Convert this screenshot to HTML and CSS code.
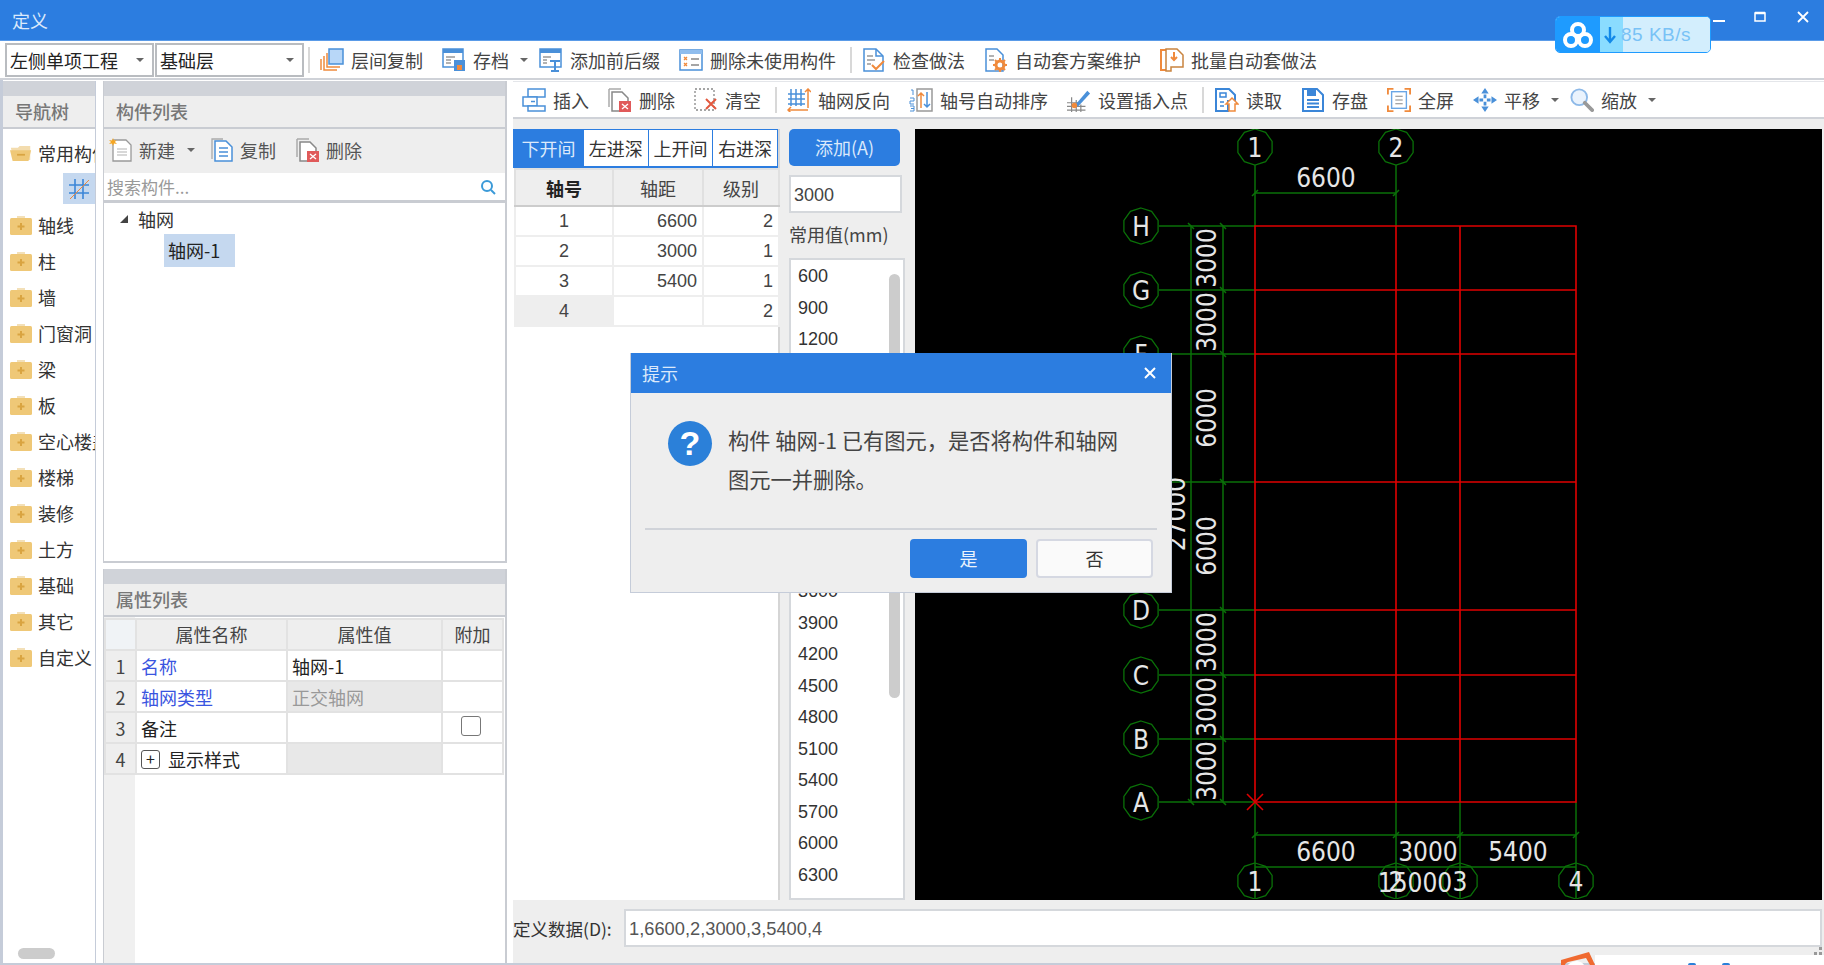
FILE: index.html
```html
<!DOCTYPE html>
<html lang="zh-CN">
<head>
<meta charset="utf-8">
<title>定义</title>
<link rel="stylesheet" href="styles.css">
</head>
<body>
<svg class="defs" width="0" height="0">
  <defs>
    <symbol id="i-folder" viewBox="0 0 22 20"><path d="M7 1h8v3H7z" fill="#f3e0b8"/><rect x="0" y="3" width="22" height="17" rx="1.5" fill="#efc877"/><path d="M11 8v7M7.500 11.500h7" stroke="#d9a441" stroke-width="2"/></symbol>
    <symbol id="i-folder-open" viewBox="0 0 25 20"><path d="M1 4h8l2 -2h12v16H4z" fill="#f3dcae"/><path d="M0 7h24l-3 12H3z" fill="#efc877"/><path d="M8 12h9" stroke="#d9a441" stroke-width="2"/></symbol>
    <symbol id="i-copyfloor" viewBox="0 0 24 24"><rect x="9" y="1" width="14" height="15" fill="#b8d7f8" stroke="#4a90d9" stroke-width="1.500"/><path d="M7 5v14h13M4 8v14h13M1 11v11" fill="none" stroke="#f08a3c" stroke-width="1.500"/></symbol>
    <symbol id="i-archive" viewBox="0 0 24 24"><rect x="1" y="1" width="20" height="18" fill="#fff" stroke="#4a90d9" stroke-width="1.500"/><rect x="1" y="1" width="20" height="4" fill="#4a90d9"/><path d="M4 9h9M4 12h5M4 15h5" stroke="#999" stroke-width="1.500"/><rect x="12" y="12" width="11" height="11" fill="#4a90d9"/><rect x="15" y="17" width="5" height="5" fill="#f08a3c"/></symbol>
    <symbol id="i-prefix" viewBox="0 0 24 24"><rect x="1" y="1" width="21" height="18" fill="#fff" stroke="#4a90d9" stroke-width="1.500"/><rect x="1" y="1" width="21" height="4" fill="#4a90d9"/><path d="M4 9h8M4 12h4M4 15h4" stroke="#999" stroke-width="1.500"/><path d="M11 13h10M16 13v10M12 23h8" stroke="#4a90d9" stroke-width="2"/></symbol>
    <symbol id="i-unused" viewBox="0 0 24 24"><rect x="1" y="2" width="22" height="20" fill="#fff" stroke="#4a90d9" stroke-width="1.500"/><rect x="1" y="2" width="22" height="4" fill="#8fbdee"/><path d="M5 9l3 3M8 9l-3 3M5 15l3 3M8 15l-3 3" stroke="#f08a3c" stroke-width="1.300"/><path d="M12 11h8M12 17h8" stroke="#888" stroke-width="1.500"/></symbol>
    <symbol id="i-check" viewBox="0 0 24 24"><path d="M2 1h12l7 7v15H2z" fill="#fff" stroke="#4a90d9" stroke-width="1.500"/><path d="M14 1v7h7" fill="none" stroke="#4a90d9" stroke-width="1.500"/><path d="M5 8h6M5 12h8M5 16h4" stroke="#999" stroke-width="1.500"/><path d="M10 17l4 4 8-8" fill="none" stroke="#f08a3c" stroke-width="2"/></symbol>
    <symbol id="i-gear" viewBox="0 0 24 24"><path d="M2 1h11l6 6v16H2z" fill="#fff" stroke="#4a90d9" stroke-width="1.500"/><path d="M5 8h5M5 12h5" stroke="#999" stroke-width="1.500"/><circle cx="16" cy="17" r="4" fill="none" stroke="#f08a3c" stroke-width="3"/><path d="M16 10v3M16 21v3M9 17h3M20 17h3M11 12l2 2M19 20l2 2M21 12l-2 2M13 20l-2 2" stroke="#f08a3c" stroke-width="2"/></symbol>
    <symbol id="i-batch" viewBox="0 0 24 24"><path d="M6 2H1v20h5" fill="none" stroke="#f08a3c" stroke-width="2"/><path d="M6 1h11l6 6v12H11v4H6z" fill="#fff" stroke="#c9843f" stroke-width="1.500"/><path d="M14 4v8M11 9l3 3 3-3" fill="none" stroke="#f08a3c" stroke-width="2"/></symbol>
    <symbol id="i-insert" viewBox="0 0 24 24"><rect x="6" y="1" width="17" height="8" fill="#fff" stroke="#4a90d9" stroke-width="1.500"/><rect x="1" y="9" width="14" height="9" fill="#fff" stroke="#4a90d9" stroke-width="1.500"/><rect x="6" y="18" width="17" height="5" fill="#fff" stroke="#4a90d9" stroke-width="1.500"/><path d="M9 13.500h4" stroke="#4a90d9" stroke-width="1.500"/></symbol>
    <symbol id="i-del" viewBox="0 0 24 24"><path d="M1 1h12M1 1v18" stroke="#aaa" stroke-width="1.500" fill="none"/><path d="M4 4h10l6 6v13H4z" fill="#fff" stroke="#888" stroke-width="1.500"/><rect x="11" y="13" width="12" height="11" fill="#e05a5a"/><path d="M14 16l6 5M20 16l-6 5" stroke="#fff" stroke-width="1.300"/></symbol>
    <symbol id="i-clear" viewBox="0 0 24 24"><rect x="1" y="1" width="19" height="21" fill="none" stroke="#888" stroke-width="1.300" stroke-dasharray="2 2"/><path d="M12 11l10 10M22 11l-10 10" stroke="#e2583e" stroke-width="2"/></symbol>
    <symbol id="i-axisrev" viewBox="0 0 24 24"><path d="M4 1v17M9 1v17M14 1v17M1 6h17M1 11h17M1 16h17" stroke="#4a90d9" stroke-width="1.500"/><path d="M21 1v19M18 4l3-3 3 3M1 22h20M4 19l-3 3 3 3" fill="none" stroke="#f08a3c" stroke-width="1.500"/></symbol>
    <symbol id="i-axissort" viewBox="0 0 24 24"><rect x="8" y="1" width="15" height="22" fill="none" stroke="#999" stroke-width="1.500"/><path d="M12 20V5M9 8l3-3 3 3" fill="none" stroke="#f08a3c" stroke-width="1.500"/><path d="M18 4v15M15 16l3 3 3-3" fill="none" stroke="#4a90d9" stroke-width="1.500"/><path d="M2 2h2v5M1 10h4v3H1v3h4M1 18h4v5H1M2 20.500h3" fill="none" stroke="#4a90d9" stroke-width="1"/></symbol>
    <symbol id="i-point" viewBox="0 0 26 26"><path d="M5 10v16M10 13v13M15 18v8M0 16h14M0 20h20M0 24h20" stroke="#888" stroke-width="1.300"/><path d="M10 17L22 3l3 3-12 13-4 2z" fill="#4a90d9"/><circle cx="8" cy="19" r="3" fill="#f08a3c"/></symbol>
    <symbol id="i-read" viewBox="0 0 24 24"><path d="M1 1h13l6 6v6h-7v10H1z" fill="#fff" stroke="#3b86d8" stroke-width="2"/><path d="M5 5h6v4H5zM5 14h4M5 18h4" stroke="#3b86d8" stroke-width="1.500" fill="none"/><path d="M17 10l6 6h-3v7h-6v-7h-3z" fill="#fff" stroke="#f08a3c" stroke-width="1.500"/></symbol>
    <symbol id="i-save" viewBox="0 0 24 24"><path d="M2 1h14l6 6v16H2z" fill="#fff" stroke="#3b86d8" stroke-width="2"/><rect x="6" y="2" width="9" height="6" fill="#3b86d8"/><path d="M6 12h12M6 15.500h12M6 19h12" stroke="#3b86d8" stroke-width="1.800"/></symbol>
    <symbol id="i-full" viewBox="0 0 26 26"><path d="M1 7V1h6M19 1h6v6M25 19v6h-6M7 25H1v-6" fill="none" stroke="#f08a3c" stroke-width="2"/><rect x="5" y="4" width="16" height="18" fill="#fff" stroke="#6aa6e6" stroke-width="1.500"/><path d="M9 9h8M9 13h8M9 17h8" stroke="#888" stroke-width="1.200"/></symbol>
    <symbol id="i-pan" viewBox="0 0 26 26"><path d="M13 0l4 6h-8zM13 26l-4-6h8zM0 13l6-4v8zM26 13l-6 4V9z" fill="#4a90d9"/><path d="M13 7v4M13 15v4M7 13h4M15 13h4" stroke="#4a90d9" stroke-width="3"/></symbol>
    <symbol id="i-zoom" viewBox="0 0 26 26"><circle cx="10" cy="10" r="8.500" fill="#eaf3fd" stroke="#8db9e8" stroke-width="2"/><path d="M16 16l8 8" stroke="#999" stroke-width="4" stroke-linecap="round"/></symbol>
    <symbol id="i-new" viewBox="0 0 24 24"><path d="M4 2h13l5 5v16H4z" fill="#fff" stroke="#999" stroke-width="1.300"/><path d="M8 11h10M8 14h10M8 17h10" stroke="#ccc" stroke-width="1.300"/><path d="M4 0l1 2.500L7.500 2 6 4l2 2-3-.5L4 8 3 5.500 0 6l2-2L0 2l3 .5z" fill="#f5a623"/></symbol>
    <symbol id="i-copy" viewBox="0 0 22 24"><path d="M1 21V1h11" fill="none" stroke="#aaa" stroke-width="1.300"/><path d="M4 3h11l6 6v14H4z" fill="#fff" stroke="#4a90d9" stroke-width="1.500"/><path d="M8 10h9M8 14h9M8 18h9" stroke="#4a90d9" stroke-width="1.300"/></symbol>
    <symbol id="c-mark" viewBox="-19 -19 38 38"><polygon points="0,-18 10.600,-14.600 17.100,-5.600 17.100,5.600 10.600,14.600 0,18 -10.600,14.600 -17.100,5.600 -17.100,-5.600 -10.600,-14.600" fill="none" stroke="#0a7008" stroke-width="1.300"/></symbol>
  </defs>
</svg>

<div class="window">
  <header class="titlebar"><span class="title">定义</span>
    <div class="winctl">
      <svg class="winbtn" width="14" height="14" viewBox="0 0 14 14"><path d="M1 9h12" stroke="#fff" stroke-width="2"/></svg>
      <svg class="winbtn" width="14" height="14" viewBox="0 0 14 14"><path d="M2 3h10v8H2z" fill="none" stroke="#fff" stroke-width="1.500"/><path d="M2 3h10" stroke="#fff" stroke-width="2.500"/></svg>
      <svg class="winbtn" width="14" height="14" viewBox="0 0 14 14"><path d="M2 2l10 10M12 2L2 12" stroke="#fff" stroke-width="1.800"/></svg>
    </div>
  </header>

  <div class="toolbar top">
    <div class="select wide"><span>左侧单项工程</span><i class="caret"></i></div>
    <div class="select"><span>基础层</span><i class="caret"></i></div>
    <i class="sep"></i>
    <div class="tool"><svg class="ico"><use href="#i-copyfloor"/></svg>层间复制</div>
    <div class="tool"><svg class="ico"><use href="#i-archive"/></svg>存档<i class="caret"></i></div>
    <div class="tool"><svg class="ico"><use href="#i-prefix"/></svg>添加前后缀</div>
    <div class="tool"><svg class="ico"><use href="#i-unused"/></svg>删除未使用构件</div>
    <i class="sep"></i>
    <div class="tool"><svg class="ico"><use href="#i-check"/></svg>检查做法</div>
    <div class="tool"><svg class="ico"><use href="#i-gear"/></svg>自动套方案维护</div>
    <div class="tool"><svg class="ico"><use href="#i-batch"/></svg>批量自动套做法</div>
  </div>

  <main class="main">
    <aside class="nav">
      <div class="band"></div>
      <div class="phead">导航树</div>
      <ul class="navtree">
        <li class="navrow"><svg class="fold"><use href="#i-folder-open"/></svg>常用构件</li>
        <li class="navsub"><span class="navsel"><svg width="22" height="22" viewBox="0 0 22 22"><path d="M7 1v20M15 1v20M1 7h20M1 15h20" stroke="#3b86d8" stroke-width="1.600"/><path d="M2 21L21 2" stroke="#f08a3c" stroke-width="1"/></svg></span></li>
        <li class="navrow"><svg class="fold"><use href="#i-folder"/></svg>轴线</li>
        <li class="navrow"><svg class="fold"><use href="#i-folder"/></svg>柱</li>
        <li class="navrow"><svg class="fold"><use href="#i-folder"/></svg>墙</li>
        <li class="navrow"><svg class="fold"><use href="#i-folder"/></svg>门窗洞</li>
        <li class="navrow"><svg class="fold"><use href="#i-folder"/></svg>梁</li>
        <li class="navrow"><svg class="fold"><use href="#i-folder"/></svg>板</li>
        <li class="navrow"><svg class="fold"><use href="#i-folder"/></svg>空心楼盖</li>
        <li class="navrow"><svg class="fold"><use href="#i-folder"/></svg>楼梯</li>
        <li class="navrow"><svg class="fold"><use href="#i-folder"/></svg>装修</li>
        <li class="navrow"><svg class="fold"><use href="#i-folder"/></svg>土方</li>
        <li class="navrow"><svg class="fold"><use href="#i-folder"/></svg>基础</li>
        <li class="navrow"><svg class="fold"><use href="#i-folder"/></svg>其它</li>
        <li class="navrow"><svg class="fold"><use href="#i-folder"/></svg>自定义</li>
      </ul>
      <div class="navthumb"></div>
    </aside>

    <section class="mid">
      <div class="panel upper">
        <div class="band"></div>
        <div class="phead">构件列表</div>
        <div class="listbar">
          <div class="ltool"><svg class="ico"><use href="#i-new"/></svg>新建<i class="caret"></i></div>
          <div class="ltool"><svg class="ico"><use href="#i-copy"/></svg>复制</div>
          <div class="ltool"><svg class="ico"><use href="#i-del"/></svg>删除</div>
        </div>
        <div class="search"><span>搜索构件...</span>
          <svg width="16" height="16" viewBox="0 0 16 16"><circle cx="7" cy="7" r="5" fill="none" stroke="#3b9ad8" stroke-width="2"/><path d="M11 11l4 4" stroke="#3b9ad8" stroke-width="2"/></svg>
        </div>
        <div class="tree">
          <div class="treeroot"><i class="tri"></i>轴网</div>
          <div class="treeleaf"><span class="leafsel">轴网-1</span></div>
        </div>
      </div>
      <div class="panel lower">
        <div class="band"></div>
        <div class="phead">属性列表</div>
        <div class="propwrap">
          <table class="props">
            <colgroup><col class="c-n"><col class="c-name"><col class="c-val"><col class="c-add"></colgroup>
            <thead><tr><th class="corner"></th><th>属性名称</th><th>属性值</th><th>附加</th></tr></thead>
            <tbody>
              <tr><td class="num">1</td><td class="link">名称</td><td>轴网-1</td><td></td></tr>
              <tr><td class="num">2</td><td class="link">轴网类型</td><td class="off">正交轴网</td><td></td></tr>
              <tr><td class="num">3</td><td>备注</td><td></td><td class="mid-c"><i class="checkbox"></i></td></tr>
              <tr><td class="num">4</td><td><i class="plus">+</i>显示样式</td><td class="off"></td><td></td></tr>
            </tbody>
          </table>
        </div>
      </div>
    </section>

    <section class="right">
      <div class="toolbar second">
        <div class="tool"><svg class="ico"><use href="#i-insert"/></svg>插入</div>
        <div class="tool"><svg class="ico"><use href="#i-del"/></svg>删除</div>
        <div class="tool"><svg class="ico"><use href="#i-clear"/></svg>清空</div>
        <i class="sep"></i>
        <div class="tool"><svg class="ico"><use href="#i-axisrev"/></svg>轴网反向</div>
        <div class="tool"><svg class="ico"><use href="#i-axissort"/></svg>轴号自动排序</div>
        <div class="tool"><svg class="ico"><use href="#i-point"/></svg>设置插入点</div>
        <i class="sep roomy"></i>
        <div class="tool"><svg class="ico"><use href="#i-read"/></svg>读取</div>
        <div class="tool"><svg class="ico"><use href="#i-save"/></svg>存盘</div>
        <div class="tool"><svg class="ico"><use href="#i-full"/></svg>全屏</div>
        <div class="tool"><svg class="ico"><use href="#i-pan"/></svg>平移<i class="caret"></i></div>
        <div class="tool"><svg class="ico"><use href="#i-zoom"/></svg>缩放<i class="caret"></i></div>
      </div>

      <div class="work">
        <div class="axes">
          <div class="tabs">
            <span class="tab active">下开间</span><span class="tab">左进深</span><span class="tab">上开间</span><span class="tab">右进深</span>
          </div>
          <table class="axistable">
            <colgroup><col class="a1"><col class="a2"><col class="a3"></colgroup>
            <thead><tr><th class="strong">轴号</th><th>轴距</th><th>级别</th></tr></thead>
            <tbody>
              <tr><td class="ctr">1</td><td class="rgt">6600</td><td class="rgt">2</td></tr>
              <tr><td class="ctr">2</td><td class="rgt">3000</td><td class="rgt">1</td></tr>
              <tr><td class="ctr">3</td><td class="rgt">5400</td><td class="rgt">1</td></tr>
              <tr><td class="ctr grey">4</td><td class="rgt"></td><td class="rgt">2</td></tr>
            </tbody>
          </table>
        </div>

        <div class="values">
          <div class="addbtn">添加(A)</div>
          <div class="valinput">3000</div>
          <div class="vallabel">常用值(mm)</div>
          <div class="vallist">
            <div class="thumb"></div>
            <div>600</div><div>900</div><div>1200</div><div>1500</div><div>1800</div><div>2100</div><div>2400</div><div>2700</div><div>3000</div><div>3300</div>
            <div>3600</div><div>3900</div><div>4200</div><div>4500</div><div>4800</div><div>5100</div><div>5400</div><div>5700</div><div>6000</div><div>6300</div>
          </div>
        </div>

        <div class="canvas">
          <svg width="907" height="770" viewBox="915 129 907 770">
            <g class="gline">
              <path d="M1159 226H1255M1159 290H1255M1159 354H1255M1159 482H1255M1159 610H1255M1159 675H1255M1159 739H1255M1159 802H1255"/>
              <path d="M1191 226V802M1223 226V802"/>
              <path d="M1255 165V226M1396 165V226M1255 193H1396"/>
              <path d="M1255 802V899M1396 802V899M1460 802V899M1576 802V899M1255 835H1576M1255 867H1576"/>
              <path class="tick" d="M1188 223l6 6M1220 223l6 6M1220 287l6 6M1220 351l6 6M1220 479l6 6M1220 607l6 6M1220 672l6 6M1220 736l6 6M1220 799l6 6M1188 799l6 6M1252 196l6-6M1393 196l6-6M1252 838l6-6M1393 838l6-6M1457 838l6-6M1573 838l6-6"/>
            </g>
            <g class="rline">
              <path d="M1255 226H1576V802H1255ZM1255 290H1576M1255 354H1576M1255 482H1576M1255 610H1576M1255 675H1576M1255 739H1576M1396 226V802M1460 226V802"/>
              <path d="M1247 794l16 16M1263 794l-16 16"/>
            </g>
            <use href="#c-mark" x="1236" y="128" width="38" height="38"/>
            <use href="#c-mark" x="1377" y="128" width="38" height="38"/>
            <use href="#c-mark" x="1122" y="207" width="38" height="38"/>
            <use href="#c-mark" x="1122" y="271" width="38" height="38"/>
            <use href="#c-mark" x="1122" y="335" width="38" height="38"/>
            <use href="#c-mark" x="1122" y="591" width="38" height="38"/>
            <use href="#c-mark" x="1122" y="656" width="38" height="38"/>
            <use href="#c-mark" x="1122" y="720" width="38" height="38"/>
            <use href="#c-mark" x="1122" y="783" width="38" height="38"/>
            <use href="#c-mark" x="1236" y="862" width="38" height="38"/>
            <use href="#c-mark" x="1377" y="862" width="38" height="38"/>
            <use href="#c-mark" x="1441" y="862" width="38" height="38"/>
            <use href="#c-mark" x="1557" y="862" width="38" height="38"/>
            <g class="ctext">
              <text x="1255" y="157">1</text><text x="1396" y="157">2</text>
              <text x="1141" y="236">H</text><text x="1141" y="300">G</text><text x="1141" y="364">F</text>
              <text x="1141" y="620">D</text><text x="1141" y="685">C</text><text x="1141" y="749">B</text><text x="1141" y="812">A</text>
              <text x="1255" y="891">1</text><text x="1396" y="891">2</text><text x="1460" y="891">3</text><text x="1576" y="891">4</text>
              <text x="1326" y="187">6600</text>
              <text x="1326" y="861">6600</text><text x="1428" y="861">3000</text><text x="1518" y="861">5400</text>
              <text x="1415" y="892">15000</text>
              <text transform="translate(1216 258) rotate(-90)">3000</text>
              <text transform="translate(1216 322) rotate(-90)">3000</text>
              <text transform="translate(1216 418) rotate(-90)">6000</text>
              <text transform="translate(1216 546) rotate(-90)">6000</text>
              <text transform="translate(1216 642) rotate(-90)">3000</text>
              <text transform="translate(1216 707) rotate(-90)">3000</text>
              <text transform="translate(1216 771) rotate(-90)">3000</text>
              <text transform="translate(1185 514) rotate(-90)">27000</text>
            </g>
          </svg>
        </div>
      </div>

      <div class="formbar">
        <label class="formlabel">定义数据(D):</label>
        <div class="forminput">1,6600,2,3000,3,5400,4</div>
      </div>
    </section>
  </main>
</div>

<div class="speed">
  <span class="speedlogo"><svg width="30" height="28" viewBox="0 0 30 28"><g fill="none" stroke="#fff" stroke-width="4"><circle cx="15" cy="9" r="6"/><circle cx="8" cy="19" r="6"/><circle cx="22" cy="19" r="6"/></g></svg></span>
  <span class="speedbar"><svg width="14" height="18" viewBox="0 0 14 18"><path d="M7 1v14M2 10l5 6 5-6" fill="none" stroke="#1289e8" stroke-width="2.400"/></svg>85 KB/s</span>
</div>

<div class="dialog">
  <div class="dhead"><span>提示</span>
    <svg width="14" height="14" viewBox="0 0 14 14"><path d="M2 2l10 10M12 2L2 12" stroke="#fff" stroke-width="2"/></svg>
  </div>
  <div class="dbody">
    <span class="qmark">?</span>
    <p class="dmsg">构件 轴网-1 已有图元，是否将构件和轴网<br>图元一并删除。</p>
  </div>
  <div class="dfoot">
    <span class="dbtn primary">是</span>
    <span class="dbtn">否</span>
  </div>
</div>

<svg class="grip" width="8" height="8" viewBox="0 0 8 8"><path d="M5 0h3v3H5zM0 5h3v3H0zM5 5h3v3H5z" fill="#999"/></svg>

<div class="taskpeek">
  <svg width="34" height="13" viewBox="0 0 34 13"><path d="M0 13V8L28 0l6 13h-5l-4-7L7 10c-2 1-3 2-3 3z" fill="#f06a30"/><path d="M7 13c1-2 4-3 8-4 3 0 6 1 8 4z" fill="#fff"/></svg>
  <span class="peekwhite"><i class="peekdot"></i><i class="peekdot"></i></span>
</div>
</body>
</html>
```
FILE: styles.css
```css
* { box-sizing: border-box; }
html, body { margin: 0; padding: 0; }
body {
  width: 1824px;
  height: 965px;
  overflow: hidden;
  position: relative;
  background: #fff;
  color: #333;
  font-family: "Noto Sans CJK SC", "Liberation Sans", sans-serif;
  font-size: 18px;
}
.defs { position: absolute; }
ul { list-style: none; margin: 0; padding: 0; }
.window { display: flex; flex-direction: column; height: 965px; }

.titlebar {
  height: 41px;
  flex: none;
  background: #2c7de0;
  color: #dbe9fb;
  display: flex;
  align-items: center;
  justify-content: space-between;
  padding-left: 12px;
  border-bottom: 1px solid #5a9be8;
}
.title { line-height: 1; }
.winctl { display: flex; gap: 29px; padding-right: 14px; margin-top: -4px; }
.winbtn { display: block; }
.winctl .winbtn:first-child { margin-top: 2px; margin-right: -2px; }

.toolbar { display: flex; align-items: center; background: #fff; white-space: nowrap; }
.toolbar.top { height: 39px; flex: none; padding-left: 5px; border-bottom: 2px solid #cfd2d8; }
.toolbar.second { height: 38px; flex: none; padding-left: 1px; border-bottom: 2px solid #cfd2d8; border-top: 1px solid #e4e6ea; }

.select {
  width: 149px;
  height: 34px;
  border: 2px solid #b9bcc0;
  margin-right: 1px;
  display: flex;
  align-items: center;
  justify-content: space-between;
  padding: 0 8px 0 3px;
  color: #222;
}
.sep { width: 2px; height: 26px; background: #d8d8d8; flex: none; margin: 0 2px 0 3px; }
.sep.roomy { margin-right: 3px; }
.caret {
  width: 0;
  height: 0;
  display: inline-block;
  border-left: 4px solid transparent;
  border-right: 4px solid transparent;
  border-top: 4px solid #666;
  flex: none;
}
.tool {
  display: flex;
  align-items: center;
  gap: 7px;
  padding: 0 8px;
  margin-right: 3px;
  height: 32px;
  color: #444;
}
.tool .caret { margin-left: 4px; margin-right: -8px; }
.ico { width: 24px; height: 24px; flex: none; display: block; }

.main {
  flex: 1;
  min-height: 0;
  display: flex;
  border-left: 3px solid #c5ccd9;
  border-bottom: 2px solid #c5ccd9;
  padding-top: 1px;
}
.band { height: 15px; background: #d0d3d9; flex: none; }
.phead {
  height: 33px;
  flex: none;
  background: #eee;
  color: #777;
  border-bottom: 2px solid #c9ccd2;
  padding: 0 0 2px 12px;
  display: flex;
  align-items: center;
  font-weight: 500;
}

.nav {
  width: 93px;
  flex: none;
  margin-right: 7px;
  display: flex;
  flex-direction: column;
  overflow: hidden;
  position: relative;
  border-right: 1px solid #c5ccd9;
}
.navtree { padding-top: 6px; }
.navrow {
  height: 36px;
  display: flex;
  align-items: center;
  gap: 6px;
  padding-left: 7px;
  white-space: nowrap;
  color: #333;
}
.fold { width: 22px; height: 20px; flex: none; }
.navsub { height: 31px; margin-top: 2px; margin-bottom: 3px; display: flex; justify-content: flex-end; }
.navsel {
  width: 32px;
  background: #c5d8ef;
  display: flex;
  align-items: center;
  justify-content: center;
}
.navthumb {
  position: absolute;
  left: 15px;
  bottom: 4px;
  width: 37px;
  height: 11px;
  border-radius: 6px;
  background: #ccc;
}

.mid { width: 404px; flex: none; display: flex; flex-direction: column; gap: 6px; }
.panel { display: flex; flex-direction: column; border-left: 1px solid #c9ccd2; border-right: 2px solid #c9ccd2; }
.upper { height: 482px; border-bottom: 2px solid #c9ccd2; }
.lower { flex: 1; min-height: 0; }
.listbar { height: 44px; flex: none; background: #eee; display: flex; align-items: center; gap: 15px; padding: 0 0 2px 5px; color: #555; }
.ltool { display: flex; align-items: center; gap: 6px; }
.ltool .caret { margin-left: 6px; }
.ltool + .ltool + .ltool { margin-left: 5px; }
.search {
  height: 30px;
  flex: none;
  background: #fff;
  border-bottom: 3px solid #c9ccd2;
  display: flex;
  align-items: center;
  justify-content: space-between;
  padding: 0 9px 0 3px;
  color: #999;
  font-size: 17px;
}
.tree { flex: 1; background: #fff; padding-top: 1px; }
.treeroot { height: 30px; display: flex; align-items: center; gap: 10px; padding-left: 16px; color: #333; }
.tri {
  width: 0;
  height: 0;
  border-bottom: 8px solid #444;
  border-left: 8px solid transparent;
}
.treeleaf { padding-left: 60px; }
.leafsel { display: inline-block; height: 33px; line-height: 33px; padding: 0 15px 0 4px; background: #c5d8ef; color: #222; }

.propwrap {
  flex: 1;
  min-height: 0;
  background: linear-gradient(to right, #f0f0f0 31px, #fff 31px);
  padding-top: 1px;
}
.props { border-collapse: collapse; table-layout: fixed; width: 400px; }
.c-n { width: 31px; }
.c-name { width: 151px; }
.c-val { width: 155px; }
.c-add { width: 61px; }
.props th, .props td { border: 2px solid #e2e2e2; height: 31px; padding: 0; font-weight: 400; }
.props th { background: #eee; color: #444; text-align: center; padding-bottom: 2px; }
.props th.corner { background: #f0f3f6; }
.props td { background: #fff; padding-left: 4px; color: #222; white-space: nowrap; }
.props td.num { background: #eee; text-align: center; padding-left: 0; color: #444; }
.props td.link { color: #3a55e0; }
.props td.off { background: #e8e8e8; color: #999; }
.props td.mid-c { padding-left: 18px; }
.checkbox { display: block; width: 20px; height: 20px; border: 1.500px solid #777; border-radius: 3px; margin-top: -3px; }
.plus {
  display: inline-block;
  width: 19px;
  height: 19px;
  line-height: 15px;
  border: 1.500px solid #555;
  border-radius: 3px;
  text-align: center;
  font-style: normal;
  margin-right: 8px;
  font-size: 16px;
  vertical-align: 2px;
}

.right {
  width: 1311px;
  flex: none;
  margin-left: 6px;
  background: #eee;
  display: flex;
  flex-direction: column;
}
.work { display: flex; padding-top: 10px; height: 781px; flex: none; }
.axes { width: 267px; flex: none; background: #fff; border-right: 2px solid #d5d5d5; position: relative; }
.tabs { display: flex; height: 39px; border: 1px solid #2c7de0; border-bottom-width: 2px; }
.tab {
  flex: 1;
  border-right: 1px solid #2c7de0;
  text-align: center;
  line-height: 37px;
  color: #333;
  background: #fff;
}
.tab:last-child { border-right: 0; }
.tab.active { background: #2c7de0; color: #dbe9fb; flex: 1.080; }
.axistable { border-collapse: collapse; table-layout: fixed; width: 264px; margin-left: 1px; }
.a1 { width: 98px; }
.a2 { width: 90px; }
.a3 { width: 76px; }
.axistable th { height: 37px; background: #eee; border: 2px solid #e0e0e0; border-bottom: 2px solid #ccc; font-weight: 400; color: #444; padding: 0; }
.axistable th.strong { font-weight: 700; color: #222; }
.axistable td { height: 30px; border: 2px solid #eee; background: #fff; padding: 0 5px; color: #444; font-family: "Liberation Sans", sans-serif; }
.ctr { text-align: center; }
.rgt { text-align: right; }
.axistable td.grey { background: #eee; }

.values { width: 116px; flex: none; margin-left: 9px; }
.addbtn {
  width: 111px;
  height: 37px;
  background: #2c7de0;
  border-radius: 5px;
  color: #dbe9fb;
  text-align: center;
  line-height: 36px;
}
.valinput {
  width: 113px;
  height: 38px;
  margin-top: 9px;
  background: #fff;
  border: 2px solid #d5d8dc;
  line-height: 36px;
  padding-left: 3px;
  color: #444;
  font-family: "Liberation Sans", sans-serif;
}
.vallabel { height: 45px; line-height: 42px; color: #444; white-space: nowrap; }
.vallist {
  width: 116px;
  height: 642px;
  background: #fff;
  border: 2px solid #d5d8dc;
  overflow: hidden;
  position: relative;
  padding: 1px 0 0 7px;
  font-family: "Liberation Sans", sans-serif;
  color: #333;
}
.vallist > div:not(.thumb) { height: 31.500px; line-height: 31.500px; }
.thumb {
  position: absolute;
  right: 3px;
  top: 14px;
  width: 11px;
  height: 424px;
  border-radius: 6px;
  background: #ccc;
}

.canvas { width: 907px; height: 771px; flex: none; margin-left: 10px; background: #000; overflow: hidden; }
.canvas svg { display: block; }
.gline path { fill: none; stroke: #0a7008; stroke-width: 1.500; }
.rline path { fill: none; stroke: #e00000; stroke-width: 1.600; }
.ctext text {
  fill: #e6e6e6;
  font-family: "DejaVu Sans Condensed", "DejaVu Sans", sans-serif;
  font-stretch: condensed;
  font-size: 26px;
  text-anchor: middle;
}

.formbar { display: flex; align-items: center; height: 38px; margin-top: 9px; white-space: nowrap; }
.formlabel { width: 111px; flex: none; color: #333; font-size: 17.500px; }
.forminput {
  width: 1198px;
  height: 38px;
  background: #fff;
  border: 2px solid #d5d8dc;
  padding-left: 3px;
  line-height: 36px;
  color: #555;
  font-size: 18.300px;
  font-family: "Liberation Sans", sans-serif;
}

.speed {
  position: absolute;
  left: 1555px;
  top: 16px;
  width: 156px;
  height: 37px;
  display: flex;
  border-radius: 5px;
  border: 1px solid #1e9bff;
  overflow: hidden;
  background: #d3eefd;
}
.speedlogo { width: 44px; flex: none; background: #1e9bff; display: flex; align-items: center; justify-content: center; }
.speedbar {
  flex: 1;
  display: flex;
  align-items: center;
  gap: 4px;
  padding-left: 3px;
  color: #79c2f6;
  font-size: 19px;
  font-family: "Liberation Sans", sans-serif;
  background: linear-gradient(to right, #8adcff 23px, #d3eefd 23px);
  letter-spacing: .5px;
}

.dialog {
  position: absolute;
  left: 630px;
  top: 353px;
  width: 542px;
  height: 240px;
  background: #eee;
  border: 1px solid #c5ccd9;
  border-top: 0;
  display: flex;
  flex-direction: column;
}
.dhead {
  height: 40px;
  flex: none;
  background: #2c7de0;
  color: #dbe9fb;
  display: flex;
  align-items: center;
  justify-content: space-between;
  padding: 0 14px 0 11px;
}
.dbody { flex: 1; display: flex; position: relative; padding: 29px 0 0 37px; }
.qmark {
  width: 44px;
  height: 45px;
  flex: none;
  border-radius: 50%;
  background: #2b80d9;
  color: #fff;
  font: 700 34px/45px "Liberation Sans", sans-serif;
  text-align: center;
  margin-top: -1px;
}
.dmsg { margin: -2px 0 0 16px; font-size: 21.250px; line-height: 39px; color: #444; white-space: nowrap; }
.dfoot {
  height: 64px;
  flex: none;
  margin: 0 14px;
  border-top: 2px solid #d0d3d9;
  display: flex;
  justify-content: flex-end;
  align-items: flex-start;
  gap: 9px;
  padding: 9px 4px 0 0;
}
.dbtn {
  width: 117px;
  height: 39px;
  border-radius: 4px;
  background: #fafafa;
  border: 2px solid #d5d8e2;
  text-align: center;
  line-height: 35px;
  color: #333;
}
.dbtn.primary { background: #2c7de0; border-color: #2c7de0; color: #eaf3fd; }

.grip { position: absolute; left: 1814px; top: 947px; display: block; }
.taskpeek { position: absolute; left: 1561px; top: 952px; width: 263px; height: 13px; display: flex; align-items: flex-end; }
.taskpeek svg { display: block; flex: none; }
.peekwhite { display: flex; align-items: flex-end; gap: 26px; padding-left: 93px; width: 229px; height: 10px; background: #fff; }
.peekdot { display: block; width: 8px; height: 2px; border-radius: 4px 4px 0 0; background: #2b80d9; }
```
